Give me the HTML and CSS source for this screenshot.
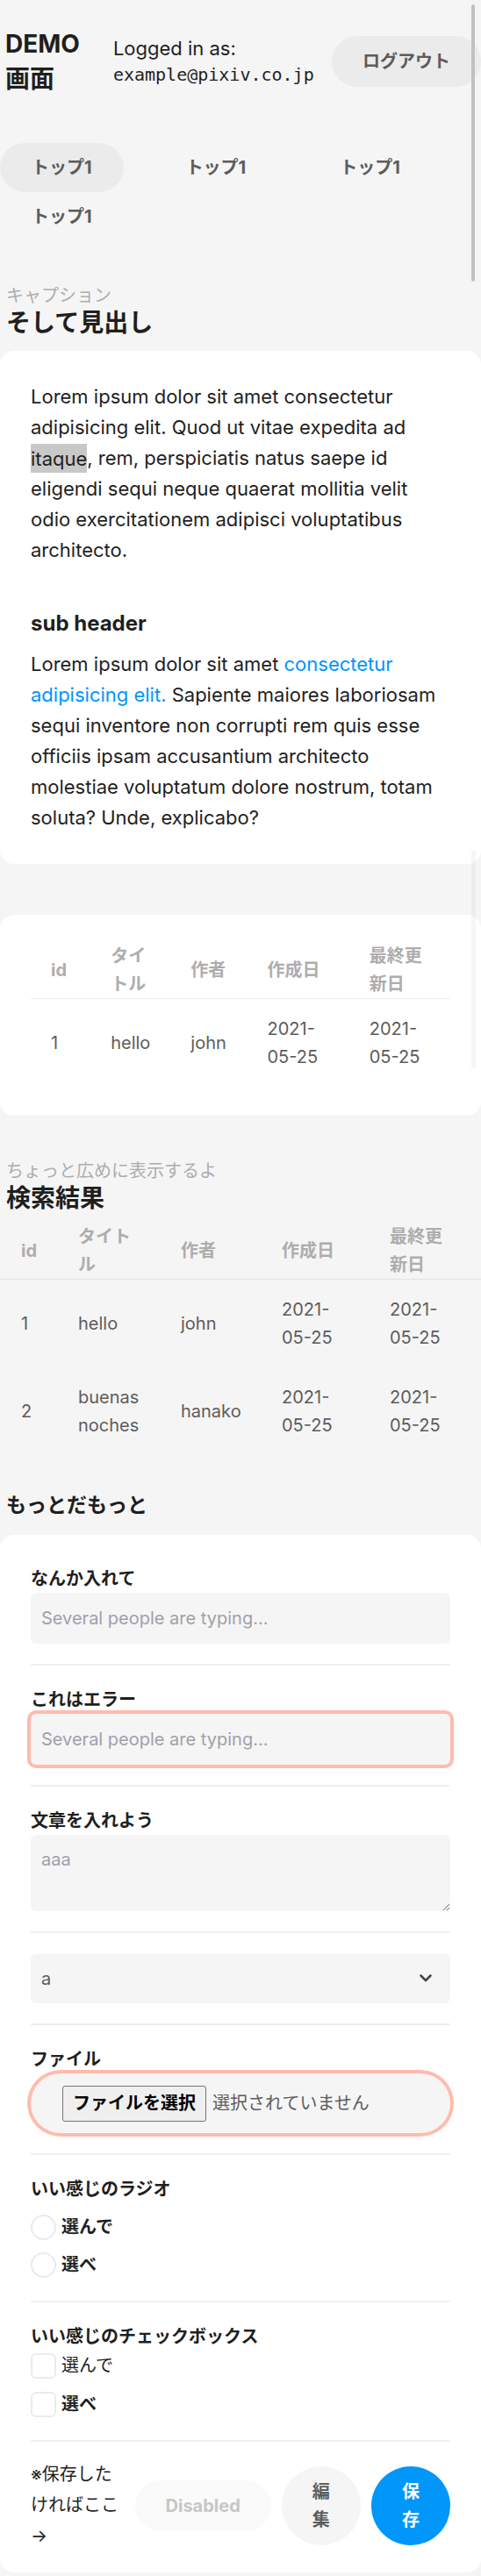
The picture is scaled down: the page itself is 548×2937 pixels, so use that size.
FILE: index.html
```html
<!DOCTYPE html>
<html lang="ja">
<head>
<meta charset="utf-8">
<title>DEMO画面</title>
<link rel="stylesheet" href="styles.css">
</head>
<body>
<div class="page">
  <div class="scroll-thumb"></div>
  <div class="scroll-track"></div>
  <header class="topbar">
    <h1 class="brand"><span>DEMO</span><span>画面</span></h1>
    <div class="user">
      <div>Logged in as:</div>
      <div class="mono">example@pixiv.co.jp</div>
    </div>
    <button class="btn logout" type="button">ログアウト</button>
  </header>

  <nav class="tabs">
    <a class="tab tab-active" href="#">トップ1</a>
    <a class="tab" href="#">トップ1</a>
    <a class="tab" href="#">トップ1</a>
    <a class="tab" href="#">トップ1</a>
  </nav>

  <section class="sec sec-first">
    <div class="sec-head">
      <div class="caption">キャプション</div>
      <h2 class="title">そして見出し</h2>
    </div>
    <div class="card card-text">
      <p class="para para-first">Lorem ipsum dolor sit amet consectetur adipisicing elit. Quod ut vitae expedita ad <span class="hl">itaque</span>, rem, perspiciatis natus saepe id eligendi sequi neque quaerat mollitia velit odio exercitationem adipisci voluptatibus architecto.</p>
      <h3 class="sub">sub header</h3>
      <p class="para">Lorem ipsum dolor sit amet <a class="link" href="#">consectetur</a> <a class="link" href="#">adipisicing elit.</a> Sapiente maiores laboriosam sequi inventore non corrupti rem quis esse officiis ipsam accusantium architecto molestiae voluptatum dolore nostrum, totam soluta? Unde, explicabo?</p>
    </div>
  </section>

  <div class="card card-table">
    <table class="tbl tbl-card">
      <colgroup>
        <col class="c1"><col class="c2"><col class="c3"><col class="c4"><col class="c5">
      </colgroup>
      <thead>
        <tr><th>id</th><th>タイトル</th><th>作者</th><th>作成日</th><th>最終更新日</th></tr>
      </thead>
      <tbody>
        <tr><td>1</td><td>hello</td><td>john</td><td>2021-05-25</td><td>2021-05-25</td></tr>
      </tbody>
    </table>
  </div>

  <section class="sec sec-wide">
    <div class="sec-head">
      <div class="caption">ちょっと広めに表示するよ</div>
      <h2 class="title">検索結果</h2>
    </div>
    <table class="tbl tbl-wide">
      <colgroup>
        <col class="c1"><col class="c2"><col class="c3"><col class="c4"><col class="c5">
      </colgroup>
      <thead>
        <tr><th>id</th><th>タイトル</th><th>作者</th><th>作成日</th><th>最終更新日</th></tr>
      </thead>
      <tbody>
        <tr><td>1</td><td>hello</td><td>john</td><td>2021-05-25</td><td>2021-05-25</td></tr>
        <tr><td>2</td><td>buenas noches</td><td>hanako</td><td>2021-05-25</td><td>2021-05-25</td></tr>
      </tbody>
    </table>
  </section>

  <section class="sec sec-form">
    <div class="sec-head">
      <h2 class="title title-sm">もっとだもっと</h2>
    </div>
    <form class="card form-card">
      <div class="field">
        <label class="label" for="f1">なんか入れて</label>
        <input class="input" id="f1" type="text" placeholder="Several people are typing...">
      </div>
      <div class="field">
        <label class="label" for="f2">これはエラー</label>
        <input class="input input-error" id="f2" type="text" placeholder="Several people are typing...">
      </div>
      <div class="field">
        <label class="label" for="f3">文章を入れよう</label>
        <textarea class="input textarea" id="f3" placeholder="aaa"></textarea>
      </div>
      <div class="field field-select">
        <div class="select-wrap">
          <select class="input select">
            <option>a</option>
            <option>b</option>
          </select>
          <svg class="chev" viewBox="0 0 16 16" aria-hidden="true"><path d="M2.5 5.5 L8 11 L13.5 5.5" fill="none" stroke="#474747" stroke-width="2.6" stroke-linecap="round" stroke-linejoin="round"/></svg>
        </div>
      </div>
      <div class="field">
        <div class="label">ファイル</div>
        <label class="file">
          <input class="file-input" type="file">
          <span class="file-btn">ファイルを選択</span>
          <span class="file-none">選択されていません</span>
        </label>
      </div>
      <div class="field">
        <div class="label">いい感じのラジオ</div>
        <div class="choices">
          <label class="choice"><input class="radio" type="radio" name="r">選んで</label>
          <label class="choice"><input class="radio" type="radio" name="r">選べ</label>
        </div>
      </div>
      <div class="field">
        <div class="label">いい感じのチェックボックス</div>
        <div class="choices choices-check">
          <label class="choice choice-light"><input class="check" type="checkbox">選んで</label>
          <label class="choice"><input class="check" type="checkbox">選べ</label>
        </div>
      </div>
      <div class="actions">
        <div class="note">※保存したければここ→</div>
        <button class="btn btn-disabled" type="button" disabled>Disabled</button>
        <button class="btn" type="button">編集</button>
        <button class="btn btn-primary" type="submit">保存</button>
      </div>
    </form>
  </section>
</div>
</body>
</html>
```

FILE: styles.css
```css
*, *::before, *::after { box-sizing: border-box; }
html, body { margin: 0; padding: 0; }
body {
  background: #f5f5f5;
  color: #1f1f1f;
  font-family: Inter, "Noto Sans CJK JP", sans-serif;
  font-size: 20px;
  line-height: 35px;
}
.page { position: relative; padding-bottom: 2px; }
.scroll-thumb {
  position: absolute; top: 5px; left: 537px; z-index: 2;
  width: 4px; height: 316px; border-radius: 2px; background: #c1c1c1;
}
.scroll-track {
  position: absolute; top: 970px; left: 537px; z-index: 2;
  width: 5px; height: 248px; background: rgba(0, 0, 0, 0.035);
}

/* header */
.topbar { display: flex; align-items: center; padding: 30px 0 0 6px; }
.brand { margin: 0; font-size: 28px; line-height: 40px; font-weight: 700; }
.brand span { display: block; }
.user { margin-left: 38px; line-height: 30px; font-size: 22px; }
.mono { font-family: "DejaVu Sans Mono", monospace; font-size: 20px; }

.btn {
  border: 0; margin: 0; border-radius: 9999px;
  padding: 13px 35px;
  font-family: inherit; font-size: 20px; line-height: 32px; font-weight: 700;
  color: #5c5c5c; background: rgba(0, 0, 0, 0.04);
  cursor: pointer;
}
.logout { margin-left: auto; flex-shrink: 0; }

/* tabs */
.tabs { display: flex; flex-wrap: wrap; column-gap: 35px; margin-top: 53px; }
.tab {
  display: block; padding: 12px 36px; line-height: 32px; font-weight: 700;
  color: #5c5c5c; text-decoration: none; border-radius: 9999px;
}
.tab-active { background: rgba(0, 0, 0, 0.04); }

/* section heads */
.sec-head { padding-left: 7px; }
.caption { line-height: 28px; color: #adadad; }
.title { margin: 0; font-size: 28px; line-height: 34px; font-weight: 700; }
.title-sm { font-size: 23px; }
.sec-first { margin-top: 48px; }
.sec-first .sec-head { margin-bottom: 15px; }
.sec-wide { margin-top: 49px; }
.sec-wide .sec-head { margin-bottom: 11px; }
.sec-form { margin-top: 40px; }
.sec-form .sec-head { margin-bottom: 17px; }

/* cards */
.card { background: #fff; border-radius: 16px; }
.card-text { padding: 35px; }
.para { margin: 0; font-size: 22px; }
.para-first { margin-bottom: 48px; }
.hl { background: #c8c8c8; padding: 3.5px 0; }
.sub { margin: 0 0 12px; font-size: 24px; line-height: 35px; font-weight: 700; }
.link { color: #0096fa; text-decoration: none; }

/* tables */
.card-table { margin-top: 58px; padding: 31px 35px 33px; }
.tbl { width: 100%; border-collapse: collapse; table-layout: fixed; line-height: 32px; }
.tbl th {
  text-align: left; font-weight: 700; color: #adadad;
  padding: 0 23px; border-bottom: 1px solid #ebebeb; vertical-align: middle;
}
.tbl td { color: #5c5c5c; padding: 18px 23px; vertical-align: middle; }
.tbl-card .c1 { width: 68px; }
.tbl-card .c2 { width: 91px; }
.tbl-card .c3 { width: 87px; }
.tbl-card .c4 { width: 116px; }
.tbl-card .c5 { width: 115px; }
.tbl-wide th { padding: 0 26px 0 24px; border-bottom-color: #e4e4e4; }
.tbl-wide td { padding: 18px 26px 18px 24px; }
.tbl-wide .c1 { width: 65px; }
.tbl-wide .c2 { width: 117px; }
.tbl-wide .c3 { width: 115px; }
.tbl-wide .c4 { width: 123px; }
.tbl-wide .c5 { width: 128px; }

/* form */
.form-card { padding: 36px 35px 0; }
.field { padding: 25px 0 23px; border-bottom: 2px solid #efefef; }
.field:first-child { padding-top: 0; }
.field-select { padding-top: 24px; }
.label { display: block; font-weight: 700; line-height: 28px; margin-bottom: 2px; }
.input {
  display: block; width: 100%; height: 58px; margin: 0;
  border: 0; border-radius: 6px; padding: 0 12px;
  background: rgba(0, 0, 0, 0.04);
  font-family: inherit; font-size: 20px; color: #1f1f1f; outline: none;
}
.input::placeholder { color: #a0a0aa; }
.input-error { box-shadow: 0 0 0 4px rgba(255, 43, 0, 0.32); }
.textarea { height: 87px; padding: 12px; line-height: 32px; resize: vertical; }
.select-wrap { position: relative; }
.select { appearance: none; -webkit-appearance: none; height: 56px; color: #5c5c5c; }
.chev {
  position: absolute; right: 20px; top: 50%;
  width: 16px; height: 16px; margin-top: -9px; pointer-events: none;
}

.file {
  display: flex; align-items: center; height: 68px; padding: 0 36px;
  border-radius: 9999px; background: rgba(0, 0, 0, 0.04);
  box-shadow: 0 0 0 4px rgba(255, 43, 0, 0.32);
}
.file-input { display: none; }
.file-btn {
  border: 1px solid #767676; border-radius: 3px; background: #efefef;
  padding: 0 11px; line-height: 39px; font-weight: 700; color: #000;
}
.file-none { margin-left: 7px; color: #5c5c5c; }

.choices { display: flex; flex-direction: column; gap: 8px; margin-top: 12px; }
.choices-check { gap: 9px; margin-top: 2px; }
.choice { display: flex; align-items: center; gap: 6px; height: 35px; font-weight: 700; }
.choice-light { font-weight: 400; }
.radio, .check {
  appearance: none; -webkit-appearance: none; margin: 0;
  width: 29px; height: 29px; border: 2px solid #ebebeb; background: #fff; flex-shrink: 0;
}
.radio { border-radius: 50%; }
.check { border-radius: 6px; }

.actions { display: flex; align-items: center; gap: 12px; padding: 20px 0 24px; }
.note { line-height: 35px; }
.btn-disabled { background: #fafafa; color: #c6c6c6; cursor: default; }
.btn-primary { background: #0096fa; color: #fff; }
```
